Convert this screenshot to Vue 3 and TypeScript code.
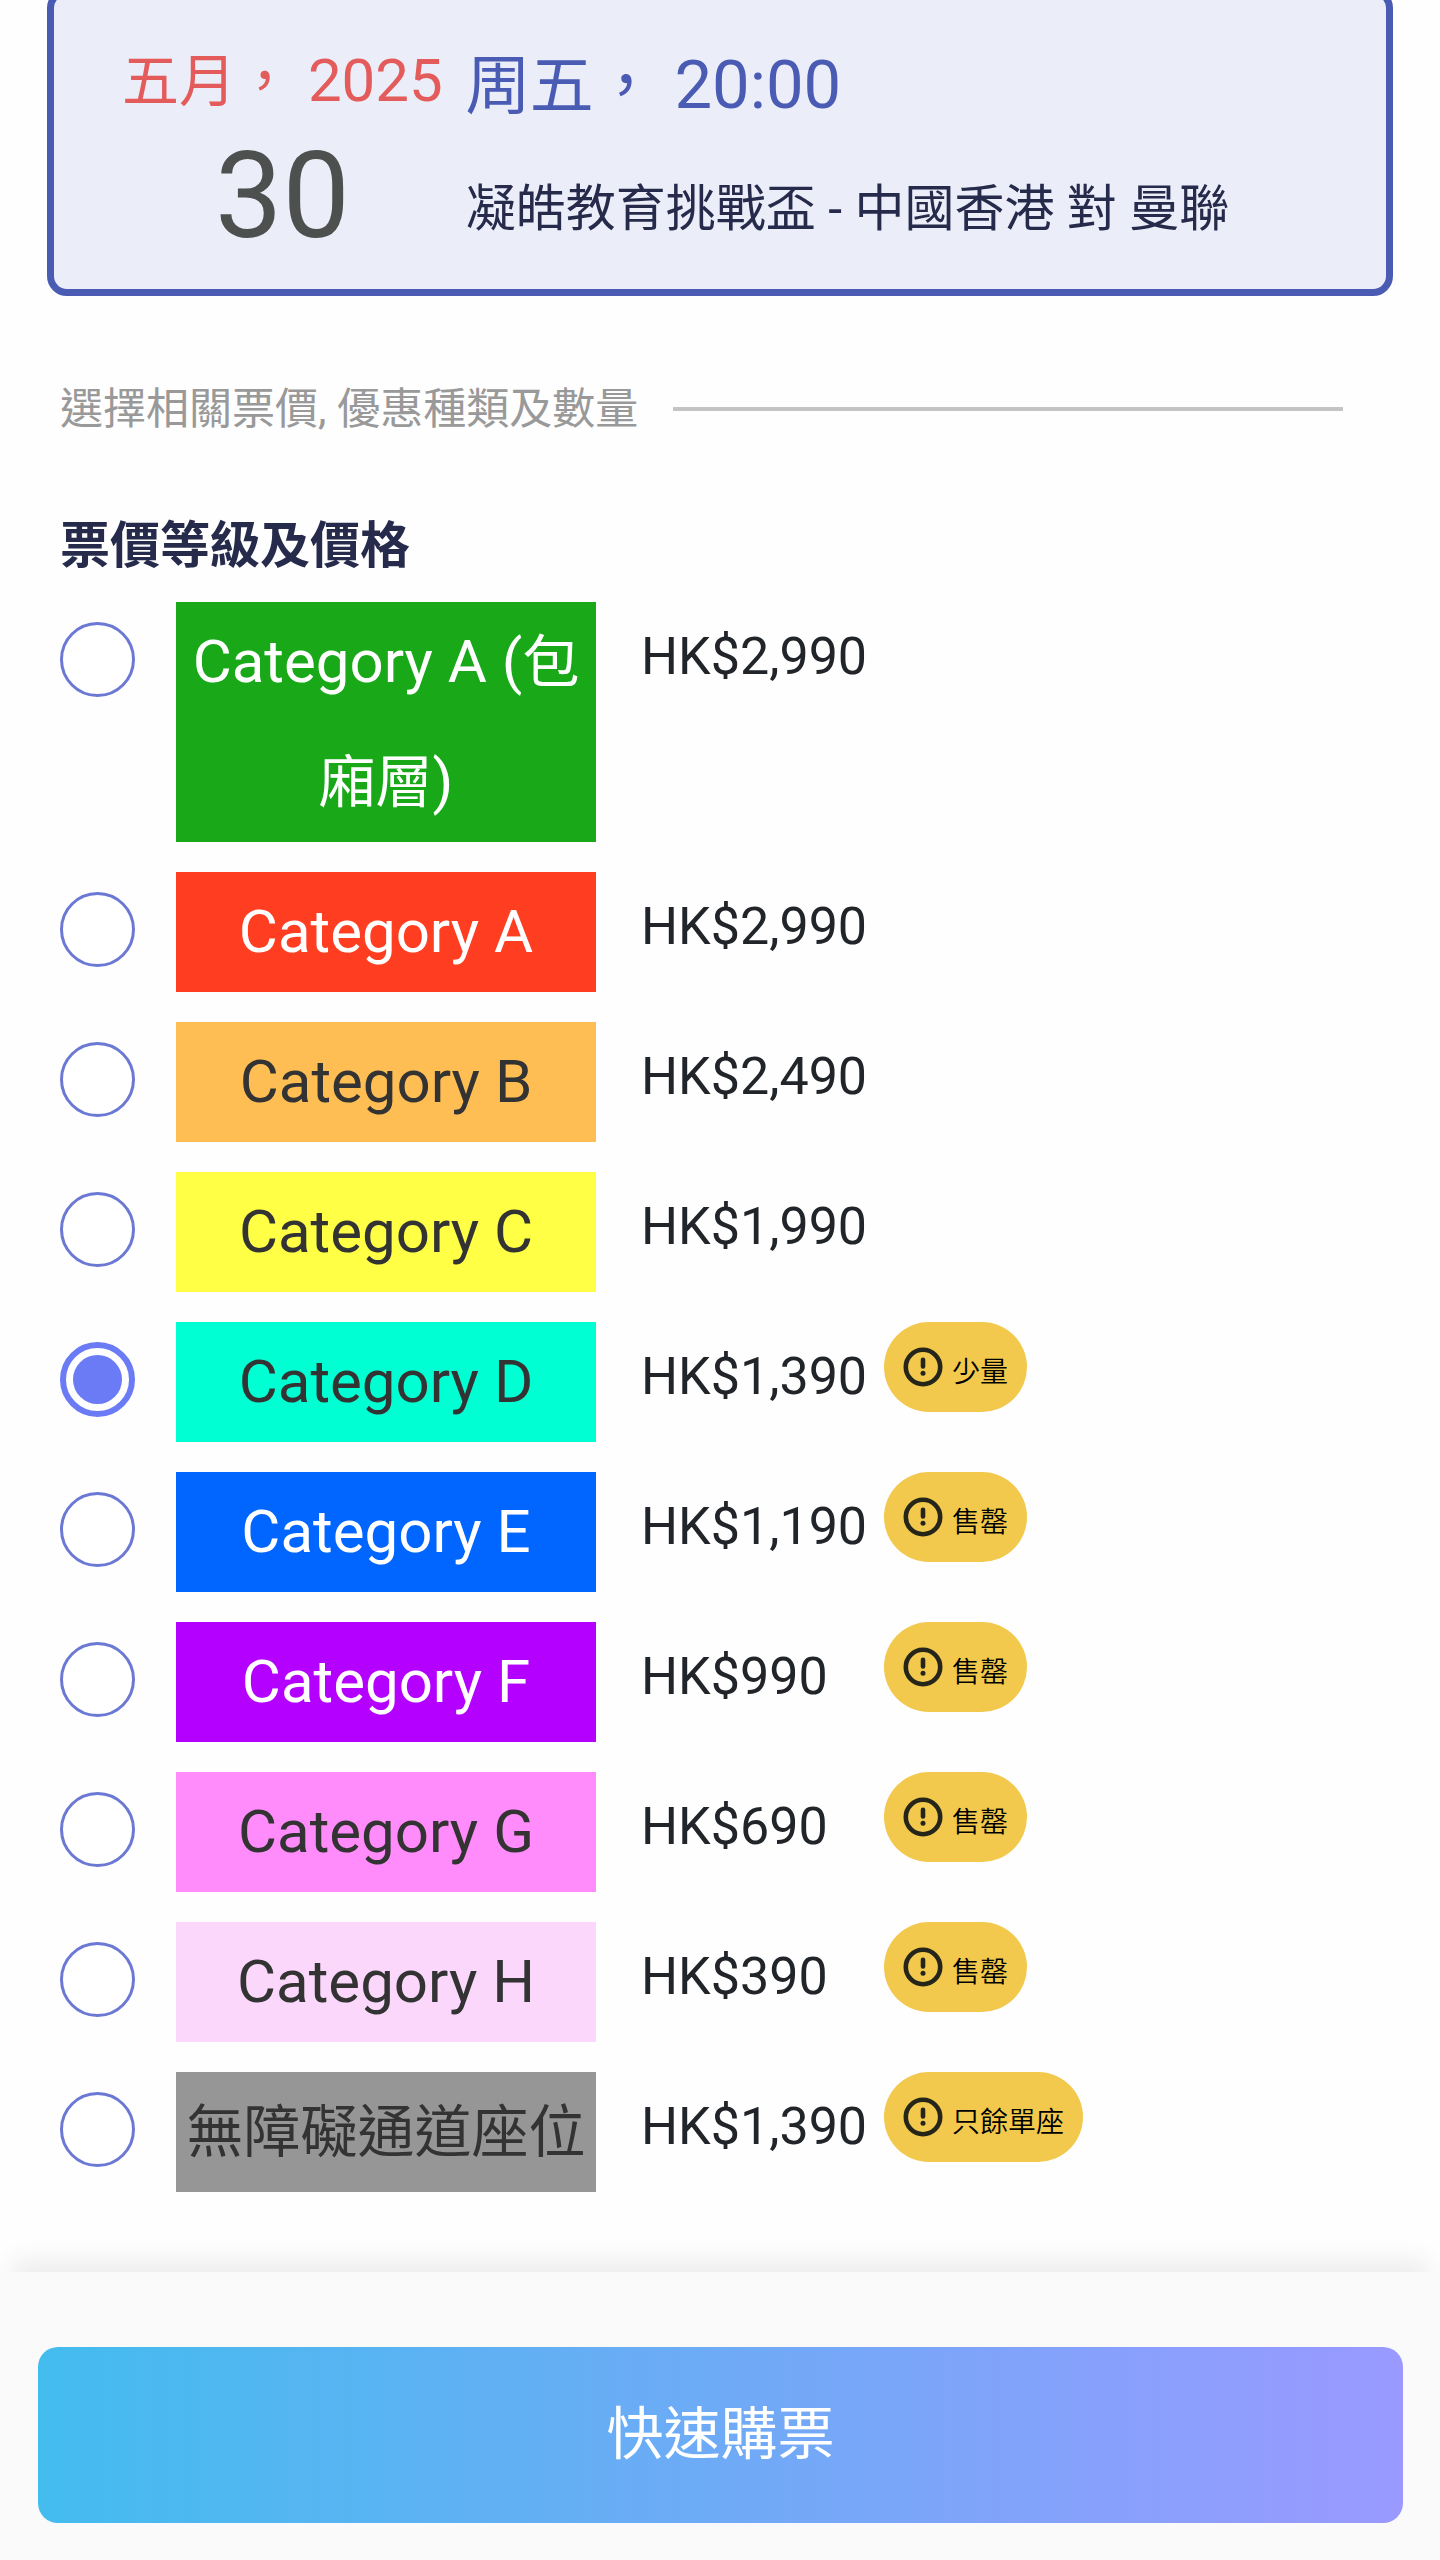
<script setup lang="ts">
import { ref } from 'vue'

interface TextPart {
  text: string
  han?: boolean
}

interface TicketPrice {
  id: string
  name: TextPart[]
  price: string
  background: string
  light?: boolean
  status?: string
}

const selected = ref('d')

const tickets: TicketPrice[] = [
  {
    id: 'a-box',
    name: [{ text: 'Category A (' }, { text: '包', han: true }, { text: '廂層', han: true }, { text: ')' }],
    price: 'HK$2,990',
    background: '#18a818',
    light: true,
  },
  { id: 'a', name: [{ text: 'Category A' }], price: 'HK$2,990', background: '#ff3d20', light: true },
  { id: 'b', name: [{ text: 'Category B' }], price: 'HK$2,490', background: '#ffbe54' },
  { id: 'c', name: [{ text: 'Category C' }], price: 'HK$1,990', background: '#ffff45' },
  { id: 'd', name: [{ text: 'Category D' }], price: 'HK$1,390', background: '#00ffd2', status: '少量' },
  { id: 'e', name: [{ text: 'Category E' }], price: 'HK$1,190', background: '#0066ff', light: true, status: '售罄' },
  { id: 'f', name: [{ text: 'Category F' }], price: 'HK$990', background: '#b400ff', light: true, status: '售罄' },
  { id: 'g', name: [{ text: 'Category G' }], price: 'HK$690', background: '#ff8cfa', status: '售罄' },
  { id: 'h', name: [{ text: 'Category H' }], price: 'HK$390', background: '#fbd7fb', status: '售罄' },
  {
    id: 'access',
    name: [{ text: '無障礙通道座位', han: true }],
    price: 'HK$1,390',
    background: '#969696',
    status: '只餘單座',
  },
]
</script>

<template>
  <div class="page" lang="zh-Hant-HK">
    <main class="content">
      <section class="event">
        <div class="event-date">
          <div class="month"><span class="han">五月，</span> 2025</div>
          <div class="day">30</div>
        </div>
        <div class="event-info">
          <div class="time"><span class="han">周五，</span> 20:00</div>
          <h1 class="title">凝皓教育挑戰盃 - 中國香港 對 曼聯</h1>
        </div>
      </section>

      <div class="step">
        <span>選擇相關票價, 優惠種類及數量</span>
        <hr class="step-line" />
      </div>

      <h2 class="heading">票價等級及價格</h2>

      <ul class="tickets">
        <li v-for="ticket in tickets" :key="ticket.id" class="ticket">
          <input
            :id="`ticket-${ticket.id}`"
            v-model="selected"
            class="radio"
            type="radio"
            name="ticket"
            :value="ticket.id"
          />
          <label
            class="name"
            :class="{ light: ticket.light }"
            :for="`ticket-${ticket.id}`"
            :style="{ background: ticket.background }"
            ><span v-for="(part, i) in ticket.name" :key="i" :class="{ han: part.han }">{{ part.text }}</span></label
          >
          <span class="price">{{ ticket.price }}</span>
          <span v-if="ticket.status" class="badge">
            <svg class="badge-icon" viewBox="0 0 40 40" fill="none" aria-hidden="true">
              <circle cx="20" cy="20" r="17.2" stroke="currentColor" stroke-width="4.6" />
              <path d="M20 12.8v6.6" stroke="currentColor" stroke-width="4.6" stroke-linecap="round" />
              <circle cx="20" cy="26.2" r="2.5" fill="currentColor" />
            </svg>
            <span class="badge-text">{{ ticket.status }}</span>
          </span>
        </li>
      </ul>
    </main>

    <footer class="footer">
      <button class="buy" type="button">快速購票</button>
    </footer>
  </div>
</template>

<style>
body {
  background: #fefefe;
}
</style>

<style scoped>
.page {
  display: flex;
  flex-direction: column;
  min-height: 100vh;
  overflow: hidden;
  font-family: Roboto, 'Noto Sans CJK TC', sans-serif;
  color: #212529;
}

.content {
  flex: 1;
  padding-bottom: 80px;
}

.han {
  line-height: 1;
}

/* The card's top edge is scrolled just out of view */
.event {
  display: flex;
  gap: 23px;
  box-sizing: border-box;
  margin: -12px 47px 0;
  padding: 40px 68px 18px;
  border: 7px solid #4a5bb4;
  border-radius: 20px;
  background: #ebeef8;
}

.event-date {
  padding-top: 5px;
  text-align: center;
  white-space: nowrap;
}

.month {
  font-size: 60px;
  line-height: 81px;
  color: #e35b5b;
}

.month .han {
  font-size: 57px;
}

.day {
  font-size: 120px;
  line-height: 150px;
  color: #4e504f;
}

.time {
  font-size: 67px;
  line-height: 100px;
  color: #4a5bb4;
}

.time .han {
  font-size: 64px;
}

.title {
  margin: 44px 0 0;
  font-size: 50px;
  font-weight: 400;
  line-height: 60px;
  color: #262b4b;
}

.step {
  display: flex;
  align-items: center;
  gap: 35px;
  margin: 83px 97px 0 60px;
  font-size: 43px;
  line-height: 60px;
  color: #999999;
}

.step-line {
  flex: 1;
  height: 4px;
  margin: 0;
  border: 0;
  background: #c4c4c4;
}

.heading {
  margin: 77px 60px 0;
  font-size: 50px;
  font-weight: 700;
  line-height: 60px;
  color: #262b4b;
}

.tickets {
  display: flex;
  flex-direction: column;
  gap: 30px;
  margin: 26px 60px 0;
  padding: 0;
  list-style: none;
}

.ticket {
  display: flex;
  align-items: flex-start;
}

.radio {
  appearance: none;
  flex: none;
  box-sizing: border-box;
  width: 75px;
  height: 75px;
  margin: 20px 41px 0 0;
  border: 3px solid #6b78d4;
  border-radius: 50%;
  background: #ffffff;
}

.radio:checked {
  padding: 7px;
  border: 6px solid #6b7bf5;
  background: #6b7bf5 content-box;
}

.name {
  flex: none;
  width: 420px;
  font-size: 60px;
  line-height: 120px;
  text-align: center;
  color: #333333;
}

.name .han {
  font-size: 57px;
}

.name.light {
  color: #ffffff;
}

.price {
  flex: none;
  width: 243px;
  margin-left: 45px;
  font-size: 52px;
  line-height: 110px;
}

.badge {
  display: flex;
  align-items: center;
  gap: 9px;
  height: 90px;
  padding: 0 19px;
  border-radius: 45px;
  background: #f2c94c;
  color: #000000;
}

.badge-icon {
  width: 40px;
  height: 40px;
  color: #26251a;
}

.badge-text {
  padding-top: 12px;
  font-size: 28px;
  font-weight: 350;
  line-height: 40px;
  white-space: nowrap;
}

.footer {
  padding: 75px 37px 37px 38px;
  background: #fafafa;
  box-shadow: 0 -24px 24px -12px rgba(0, 0, 0, 0.07);
}

.buy {
  display: block;
  width: 100%;
  padding: 0;
  border: 0;
  border-radius: 20px;
  background: linear-gradient(90deg, #43bcee, #9a99ff);
  font-family: inherit;
  font-size: 57px;
  line-height: 176px;
  color: #ffffff;
}
</style>
